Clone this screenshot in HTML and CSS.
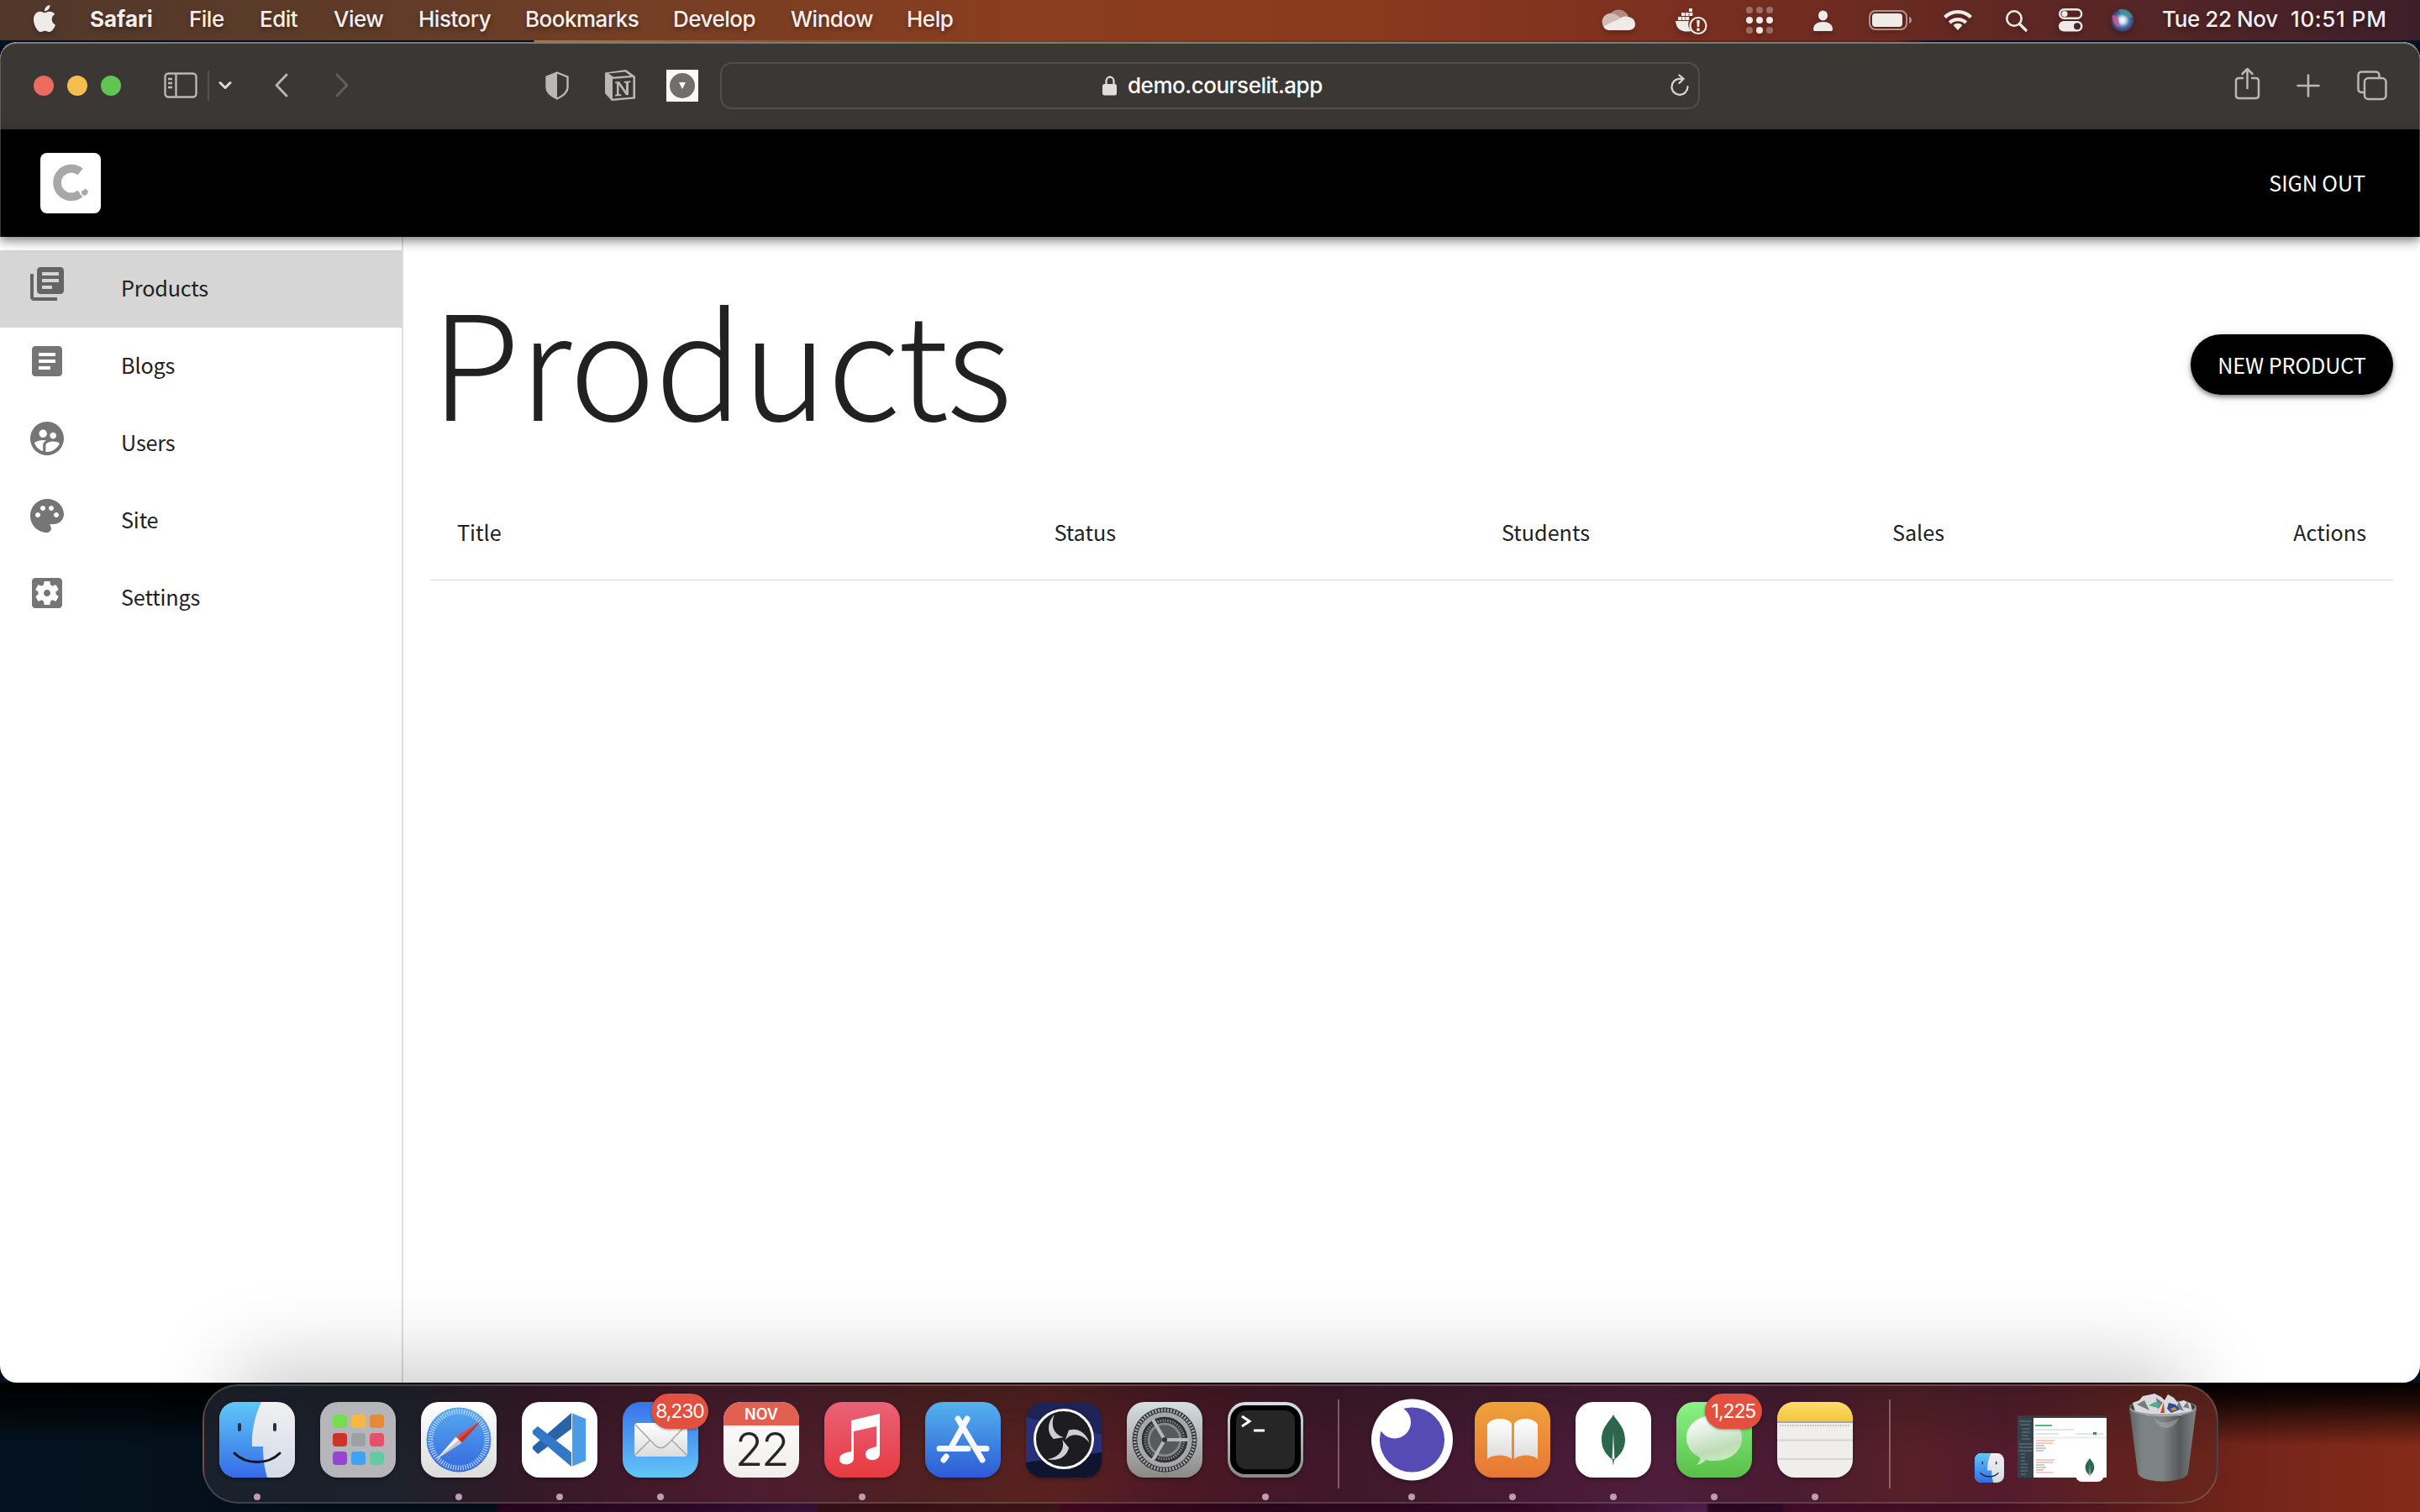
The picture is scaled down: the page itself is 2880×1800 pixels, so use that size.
FILE: index.html
```html
<!DOCTYPE html>
<html lang="en">
<head>
<meta charset="utf-8">
<title>Products</title>
<link rel="stylesheet" href="styles.css">
</head>
<body>
<header class="menubar">
  <svg class="apple" viewBox="0 0 24 24"><path d="M12.152 6.896c-.948 0-2.415-1.078-3.96-1.04-2.04.027-3.91 1.183-4.961 3.014-2.117 3.675-.546 9.103 1.519 12.09 1.013 1.454 2.208 3.09 3.792 3.039 1.52-.065 2.09-.987 3.935-.987 1.831 0 2.35.987 3.96.948 1.637-.026 2.676-1.48 3.676-2.948 1.156-1.688 1.636-3.325 1.662-3.415-.039-.013-3.182-1.221-3.22-4.857-.026-3.04 2.48-4.494 2.597-4.559-1.429-2.09-3.623-2.324-4.39-2.376-2-.156-3.675 1.09-4.61 1.09zM15.53 3.83c.843-1.012 1.4-2.427 1.245-3.83-1.207.052-2.662.805-3.532 1.818-.78.896-1.454 2.338-1.273 3.714 1.338.104 2.715-.688 3.559-1.701"/></svg>
  <nav class="menus"><b>Safari</b><span>File</span><span>Edit</span><span>View</span><span>History</span><span>Bookmarks</span><span>Develop</span><span>Window</span><span>Help</span></nav>
  <div class="status">
    <svg width="40" height="44" viewBox="0 0 40 44"><path d="M9 19a12 11 0 0 1 23 1l-10 5z" fill="#b28a81"/><path d="M2 31a10 10 0 0 1 7-15c7-1 10 3 15 6z" fill="#d2bab5"/><path d="M2 31 22 22c3-3 7-3 10-2 5 1 8 4 8 9 0 4-3 7-8 7H10c-4 0-7-2-8-5z"/></svg>
    <svg width="40" height="44" viewBox="0 0 40 44"><path d="M17 10h4v4h-4zM8 15h4v4H8zM12.700 15h4v4h-4zM17.400 15h4v4h-4zM4 20h4v4H4zM8.600 20h4v4h-4zM13.200 20h4v4h-4zM1 25h16c-2 5 0 9 3 12-10 2-18-1-19-12z"/><circle cx="28" cy="30.500" r="9.500" fill="none" stroke="#efebe9" stroke-width="2.200"/><path d="M26.200 24h3.600l-.6 8h-2.400z"/><circle cx="28" cy="35.200" r="1.900"/></svg>
    <svg width="34" height="44" viewBox="0 0 34 44"><g opacity=".35"><circle cx="4" cy="12" r="4"/><circle cx="16" cy="12" r="4"/><circle cx="28" cy="12" r="4"/><circle cx="4" cy="36" r="4"/><circle cx="28" cy="36" r="4"/></g><circle cx="4" cy="24" r="4"/><circle cx="16" cy="24" r="4"/><circle cx="28" cy="24" r="4"/><circle cx="16" cy="36" r="4"/></svg>
    <svg width="26" height="44" viewBox="0 0 26 44"><ellipse cx="12.500" cy="18.500" rx="5.500" ry="6"/><path d="M1 35c0-6 5-9 11.500-9S24 29 24 35c0 1.500-1 2-2 2H3c-1 0-2-.5-2-2z"/></svg>
    <svg width="52" height="44" viewBox="0 0 52 44"><rect x="1" y="13" width="44" height="22" rx="7" fill="none" stroke="#efebe9" stroke-width="2" opacity=".55"/><rect x="4" y="16" width="36" height="16" rx="4"/><path d="M48 20c4 1 4 7 0 8z" opacity=".55"/></svg>
    <svg width="36" height="44" viewBox="0 0 36 44"><g fill="none" stroke="#efebe9" stroke-width="4.400"><path d="M1.500 20.500a22 22 0 0 1 31 0"/><path d="M7.300 27a14 14 0 0 1 19.400 0"/></g><path d="M17 36l-5.500-6a8 8 0 0 1 11 0z"/></svg>
    <svg width="28" height="44" viewBox="0 0 28 44" stroke="#efebe9" stroke-width="2.600"><circle cx="10" cy="22" r="8.700" fill="none"/><path d="M16.500 28.500l7.500 7.500" stroke-width="3.200" stroke-linecap="round"/></svg>
    <svg width="30" height="44" viewBox="0 0 30 44"><rect x="1.200" y="11.200" width="26" height="10.600" rx="5.300" fill="none" stroke="#efebe9" stroke-width="2.400"/><circle cx="7" cy="16.500" r="3.600"/><rect y="25" width="28.500" height="12.500" rx="6.200"/><circle cx="22" cy="31.200" r="4" fill="#4a242b"/></svg>
    <svg width="30" height="44" viewBox="0 0 30 44"><defs><radialGradient id="siri"><stop offset="0" stop-color="#fff"/><stop offset=".25" stop-color="#cfe6f2"/><stop offset=".6" stop-color="#4d6fb0"/><stop offset="1" stop-color="#3a2f52"/></radialGradient></defs><circle cx="14" cy="24" r="14" fill="url(#siri)"/><path d="M2 18c5 0 9 5 8 14-5 0-9-8-8-14z" fill="#d9548a" opacity=".8"/><path d="M9 12c8-3 15 2 17 9-6 0-13-3-17-9z" fill="#3fa08a" opacity=".8"/></svg>
    <span>Tue 22 Nov</span><span class="time">10:51 PM</span>
  </div>
</header>

<main class="window">
  <div class="toolbar">
    <div class="lights"><i></i><i></i><i></i></div>
    <svg class="t-side" width="40" height="32" viewBox="0 0 40 32" fill="none" stroke="#bbb7b4" stroke-width="2.400"><rect x="1.500" y="1.500" width="37" height="28" rx="4"/><path d="M14.500 2v27M5 8h5M5 13h5M5 18h5"/></svg>
    <span class="t-line"></span>
    <svg class="t-chev" width="16" height="12" viewBox="0 0 16 12" fill="none" stroke="#dddad8" stroke-width="3" stroke-linecap="round" stroke-linejoin="round"><path d="M2 2.500l6 6 6-6"/></svg>
    <svg class="t-back" width="18" height="32" viewBox="0 0 18 32" fill="none" stroke="#bbb7b4" stroke-width="2.800" stroke-linecap="round" stroke-linejoin="round"><path d="M15 3L3 15.500 15 28"/></svg>
    <svg class="t-fwd" width="18" height="32" viewBox="0 0 18 32" fill="none" stroke="#63605c" stroke-width="2.800" stroke-linecap="round" stroke-linejoin="round"><path d="M3 3l12 12.500L3 28"/></svg>
    <svg class="t-shield" width="28" height="34" viewBox="0 0 28 34"><path d="M14 1.500l12.500 5V19c0 6-6 10.500-12.500 13.500C7.500 29.500 1.500 25 1.500 19V6.500z" fill="none" stroke="#bbb7b4" stroke-width="2.400"/><path d="M14 1.500v31C7.500 29.500 1.500 25 1.500 19V6.500z" fill="#bbb7b4"/></svg>
    <svg class="t-notion" width="38" height="40" viewBox="0 0 38 40"><path d="M1 4.500L26 1l11 8v26.500L9 38 1 29z" fill="#bbb7b4"/><path d="M5 5.500L25 3.500l6 4.500-20 1.500zM10 12l24.500-2v23.500L10 35.500z" fill="#3b3734"/><path d="M13 15.500l5-.5 8 11.500V17l-2.500-.5V15l8-.7v1.500l-2.500.7V31l-3 .3L17.500 19v11l3 .5v1.400l-7.500.6v-1.500l2-.7V17.300l-2-.3z" fill="#bbb7b4"/></svg>
    <svg class="t-ext" width="38" height="38" viewBox="0 0 38 38"><path d="M0 0h38v38H0z" fill="#fafafa"/><circle cx="19" cy="19" r="15" fill="#716e6c"/><path d="M15 15h8l-4 8z" fill="#fff"/></svg>
    <div class="url">
      <span class="host"><svg width="18" height="24" viewBox="0 0 18 24"><path d="M4.500 11V7a4.500 5.300 0 0 1 9 0v4" fill="none" stroke="#dedede" stroke-width="2.200"/><rect y="10" width="17" height="13.500" rx="2.500" fill="#dedede"/></svg>demo.courselit.app</span>
      <svg class="reload" width="24" height="28" viewBox="0 0 24 28" fill="none" stroke="#d8d5d3" stroke-width="2.200" stroke-linecap="round"><path d="M20.500 15a9.500 9.500 0 1 1-9.500-9.200h4M10.500 1.500l5 4.400-5 5"/></svg>
    </div>
    <svg class="t-share" width="32" height="40" viewBox="0 0 32 40" fill="none" stroke="#bbb7b4" stroke-width="2.500" stroke-linecap="round" stroke-linejoin="round"><path d="M10 13H5.500C3 13 2 14 2 16.500v17C2 36 3 37 5.500 37h20c2.500 0 3.500-1 3.500-3.500v-17c0-2.500-1-3.500-3.500-3.500H21M15.500 25V2M9.500 8l6-6 6 6"/></svg>
    <svg class="t-plus" width="28" height="28" viewBox="0 0 28 28" stroke="#bbb7b4" stroke-width="2.600" stroke-linecap="round"><path d="M14 1.500v25M1.500 14h25"/></svg>
    <svg class="t-tabs" width="36" height="36" viewBox="0 0 36 36" fill="none" stroke="#bbb7b4" stroke-width="2.500"><path d="M8.500 26H6c-3 0-4.500-1.500-4.500-4.500V6C1.500 3 3 1.500 6 1.500h16c3 0 4.500 1.500 4.500 4.500v3"/><rect x="9" y="9" width="25.500" height="25" rx="4.500"/></svg>
  </div>

  <div class="appbar">
    <svg class="logo" viewBox="0 0 72 72"><rect width="72" height="72" rx="8" fill="#fff"/><path d="M47.500 22.500A16.800 16.800 0 1 0 47.500 48.500" fill="none" stroke="#a8a8a8" stroke-width="9.800"/><circle cx="53" cy="46.500" r="6" fill="#fff"/><path d="M53.500 42c1 1.500 1.500 2 2 3l1.200-1.200c.5 2-.2 7-4 7s-4.800-4-2.800-6.500l1 1c.5-1.300 1.800-2 2.600-3.300z" fill="#a8a8a8"/></svg>
    <span class="signout">SIGN OUT</span>
  </div>

  <div class="content">
    <aside class="sidebar">
      <a class="item selected"><svg viewBox="0 0 24 24"><path d="M4 6H2v14c0 1.100.9 2 2 2h14v-2H4V6zm16-4H8c-1.100 0-2 .9-2 2v12c0 1.100.9 2 2 2h12c1.100 0 2-.9 2-2V4c0-1.100-.9-2-2-2zm-1 9H9V9h10v2zm-4 4H9v-2h6v2zm4-8H9V5h10v2z"/></svg><span>Products</span></a>
      <a class="item"><svg viewBox="0 0 24 24"><path d="M19 3H5c-1.100 0-2 .9-2 2v14c0 1.100.9 2 2 2h14c1.100 0 2-.9 2-2V5c0-1.100-.9-2-2-2zm-5 14H7v-2h7v2zm3-4H7v-2h10v2zm0-4H7V7h10v2z"/></svg><span>Blogs</span></a>
      <a class="item"><svg viewBox="0 0 24 24"><path d="M11.990 2c-5.520 0-10 4.480-10 10s4.480 10 10 10 10-4.480 10-10-4.480-10-10-10zm3.610 6.340c1.070 0 1.930.86 1.930 1.930 0 1.070-.86 1.930-1.930 1.930-1.070 0-1.930-.86-1.930-1.930-.01-1.070.86-1.930 1.930-1.930zm-6-1.580c1.300 0 2.360 1.060 2.360 2.360 0 1.300-1.060 2.360-2.360 2.360s-2.360-1.060-2.360-2.360c0-1.310 1.050-2.360 2.360-2.360zm0 9.130v3.750c-2.400-.75-4.300-2.600-5.140-4.960 1.050-1.120 3.670-1.690 5.140-1.690.53 0 1.200.08 1.900.22-1.640.87-1.900 2.020-1.900 2.680zM11.990 20c-.27 0-.53-.01-.79-.04v-4.070c0-1.420 2.940-2.130 4.400-2.130 1.070 0 2.920.39 3.840 1.150-1.170 2.970-4.060 5.090-7.450 5.090z"/></svg><span>Users</span></a>
      <a class="item"><svg viewBox="0 0 24 24"><path d="M12 2C6.490 2 2 6.490 2 12s4.490 10 10 10c1.380 0 2.500-1.120 2.500-2.500 0-.61-.23-1.200-.64-1.670-.08-.1-.13-.21-.13-.33 0-.28.22-.5.5-.5H16c3.310 0 6-2.690 6-6 0-4.960-4.490-9-10-9zm5.500 11c-.83 0-1.500-.67-1.500-1.500s.67-1.500 1.500-1.500 1.500.67 1.500 1.500-.67 1.500-1.500 1.500zm-3-4c-.83 0-1.500-.67-1.500-1.500S13.670 6 14.500 6s1.500.67 1.500 1.500S15.330 9 14.500 9zM5 11.500c0-.83.67-1.500 1.500-1.500s1.500.67 1.500 1.500S7.330 13 6.500 13 5 12.330 5 11.500zm6-4c0 .83-.67 1.500-1.500 1.500S8 8.330 8 7.500 8.670 6 9.500 6s1.500.67 1.500 1.500z"/></svg><span>Site</span></a>
      <a class="item"><svg viewBox="0 0 24 24"><path d="M12 10c-1.100 0-2 .9-2 2s.9 2 2 2 2-.9 2-2-.9-2-2-2zm7-7H5c-1.110 0-2 .9-2 2v14c0 1.100.89 2 2 2h14c1.110 0 2-.9 2-2V5c0-1.100-.89-2-2-2zm-1.750 9c0 .23-.02.46-.05.68l1.480 1.160c.13.11.17.3.08.45l-1.400 2.420c-.09.15-.27.21-.43.15l-1.740-.7c-.36.28-.76.51-1.180.69l-.26 1.850c-.03.17-.18.3-.35.3h-2.800c-.17 0-.32-.13-.35-.29l-.26-1.850c-.43-.18-.82-.41-1.180-.69l-1.740.7c-.16.06-.34 0-.43-.15l-1.400-2.420c-.09-.15-.05-.34.08-.45l1.480-1.160c-.03-.23-.05-.46-.05-.69 0-.23.02-.46.05-.68l-1.480-1.160c-.13-.11-.17-.3-.08-.45l1.400-2.420c.09-.15.27-.21.43-.15l1.740.7c.36-.28.76-.51 1.180-.69l.26-1.850c.03-.17.18-.3.35-.3h2.800c.17 0 .32.13.35.29l.26 1.850c.43.18.82.41 1.180.69l1.740-.7c.16-.06.34 0 .43.15l1.400 2.420c.09.15.05.34-.08.45l-1.480 1.160c.03.23.05.46.05.69z"/></svg><span>Settings</span></a>
    </aside>
    <section class="page">
      <div class="heading"><h1>Products</h1><button class="new">NEW PRODUCT</button></div>
      <div class="thead"><span>Title</span><span>Status</span><span>Students</span><span>Sales</span><span>Actions</span></div>
    </section>
  </div>
</main>

<footer class="desktop">
  <svg width="0" height="0" class="defs"><defs>
    <linearGradient id="fb" x2="0" y2="1"><stop stop-color="#5fc8f8"/><stop offset="1" stop-color="#356be8"/></linearGradient>
    <linearGradient id="fw" x2="0" y2="1"><stop stop-color="#f1f0f2"/><stop offset="1" stop-color="#d3dbe6"/></linearGradient>
    <linearGradient id="sf" x2="0" y2="1"><stop stop-color="#56aaf0"/><stop offset="1" stop-color="#3668e0"/></linearGradient>
    <linearGradient id="wg" x2="0" y2="1"><stop stop-color="#fff"/><stop offset="1" stop-color="#dcdcdc"/></linearGradient>
    <linearGradient id="mt" x2="0" y2="1"><stop stop-color="#d6dee3"/><stop offset="1" stop-color="#8b8985"/></linearGradient>
    <linearGradient id="tr" x2="1" y2="0"><stop stop-color="#5d6265"/><stop offset=".18" stop-color="#7c8184"/><stop offset=".5" stop-color="#7e8386"/><stop offset=".75" stop-color="#55595c"/><stop offset="1" stop-color="#808487"/></linearGradient>
    <linearGradient id="bb" x1=".3" x2=".6" y2="1"><stop stop-color="#fff"/><stop offset=".7" stop-color="#bfdcb8"/><stop offset="1" stop-color="#c9f0bd"/></linearGradient>
    <g id="finder"><rect width="90" height="90" rx="21" fill="url(#fw)"/><path d="M50 0H21C8 0 0 8 0 21v48c0 13 8 21 21 21h36c-3-10-5-22-5-37H39C38 34 43 15 50 0z" fill="url(#fb)"/><path d="M24 27v6M66 27v6" stroke="#2a2e3a" stroke-width="4" stroke-linecap="round"/><path d="M18 61c14 14 40 14 54 0" fill="none" stroke="#16161a" stroke-width="3" stroke-linecap="round"/></g>
    <g id="leaf"><path d="M45 15c3 7 14 14 14 30 0 12-7 19-13 24l-1 7-1-7c-6-5-13-12-13-24 0-16 11-23 14-30z" fill="#2c664c"/><path d="M45 36l1.500 32h-3z" fill="#e6efe9"/></g>
  </defs></svg>
  <div class="dock">
    <div class="app run"><svg viewBox="0 0 90 90"><use href="#finder"/></svg></div>
    <div class="app launch"><svg viewBox="0 0 90 90"><rect width="90" height="90" rx="21" fill="#b5b5ba"/><g><rect x="15" y="15" width="17" height="16" rx="4" fill="#74de50"/><rect x="37" y="15" width="17" height="16" rx="4" fill="#f4b942"/><rect x="59" y="15" width="17" height="16" rx="4" fill="#e58a38"/><rect x="15" y="37" width="17" height="16" rx="4" fill="#cb3427"/><rect x="37" y="37" width="17" height="16" rx="4" fill="#9ba2a6"/><rect x="59" y="37" width="17" height="16" rx="4" fill="#e8506a"/><rect x="15" y="59" width="17" height="16" rx="4" fill="#9347ce"/><rect x="37" y="59" width="17" height="16" rx="4" fill="#42a2f2"/><rect x="59" y="59" width="17" height="16" rx="4" fill="#66c9a6"/></g></svg></div>
    <div class="app run"><svg viewBox="0 0 90 90"><rect width="90" height="90" rx="21" fill="url(#wg)"/><circle cx="45" cy="45" r="38.500" fill="url(#sf)"/><circle cx="45" cy="45" r="33.500" fill="none" stroke="#c8def8" stroke-width="6" stroke-dasharray="1.100 1.824"/><path d="M72 22L41.500 41.500l7 7z" fill="#e4493e"/><path d="M18.500 68l23-26.500 7 7z" fill="#f4f4f4"/><path d="M72 22L45 45l3.500 3.500z" fill="#b83730"/><path d="M18.500 68L45 45l3.500 3.500z" fill="#c4c6ca"/></svg></div>
    <div class="app run"><svg viewBox="0 0 90 90"><rect width="90" height="90" rx="21" fill="#fff"/><path d="M59 13v19L19 62l-6-6v-3z" fill="#2864a8"/><path d="M19 29l40 31v17L13 38v-4z" fill="#3277c8"/><path d="M59 13l17 7v50l-17 7c2-1 1-3 1-5V18c0-2 1-4-1-5z" fill="#4a9be8"/></svg></div>
    <div class="app run mail"><svg viewBox="0 0 90 90"><defs><linearGradient id="ml" x2="0" y2="1"><stop stop-color="#3a72ea"/><stop offset="1" stop-color="#62c6f8"/></linearGradient></defs><rect width="90" height="90" rx="21" fill="url(#ml)"/><rect x="14" y="25" width="63" height="40" rx="4" fill="url(#wg)"/><path d="M15 63l18-18M76 63L58 45M15 27l23 24c5 5 10 5 15 0l23-24" fill="none" stroke="#a9a9ab" stroke-width="1.600"/></svg><span class="badge">8,230</span></div>
    <div class="app"><div class="cal"><b>NOV</b><span>22</span></div></div>
    <div class="app run"><svg viewBox="0 0 90 90"><defs><linearGradient id="mu" x2="0" y2="1"><stop stop-color="#ea6278"/><stop offset="1" stop-color="#e63a41"/></linearGradient></defs><rect width="90" height="90" rx="21" fill="url(#mu)"/><path d="M32 22l34-8v48c0 9-17 10-17 0 0-6 7-7 13-9V29l-27 6v32c0 9-17 10-17 1 0-6 7-8 14-9z" fill="#fff"/></svg></div>
    <div class="app"><svg viewBox="0 0 90 90"><defs><linearGradient id="as" x2="0" y2="1"><stop stop-color="#54b2ee"/><stop offset="1" stop-color="#2c5bd6"/></linearGradient></defs><rect width="90" height="90" rx="21" fill="url(#as)"/><path d="M50 20L31 54M39 20l29 49M17 55.500h34M62 55.500h11M25 65l-3 4" stroke="#f8f9fc" stroke-width="7" stroke-linecap="round"/></svg></div>
    <div class="app"><svg viewBox="0 0 90 90"><rect width="90" height="90" rx="21" fill="#1d2356"/><path d="M0 18l25 6v44L0 72zM70 35l20 4v22l-20 4z" fill="#29307a"/><path d="M0 72l90-12v9c0 13-8 21-21 21H21C9 90 0 82 0 72z" fill="#10152f"/><circle cx="45" cy="44" r="34.500" fill="#1d1c20" stroke="#fff" stroke-width="3"/><g id="ob"><path d="M34 15c-8 8-10 21-1 29l12-2c-13-3-16-16-11-27z" fill="#cfcfd1"/></g><use href="#ob" transform="rotate(120 45 44)"/><use href="#ob" transform="rotate(240 45 44)"/></svg></div>
    <div class="app"><svg viewBox="0 0 90 90"><rect width="90" height="90" rx="21" fill="url(#mt)"/><circle cx="45" cy="45" r="38.500" fill="#2e3032"/><circle cx="45" cy="45" r="35.500" fill="none" stroke="#a9adb0" stroke-width="4" stroke-dasharray="2 1.700"/><circle cx="45" cy="45" r="30" fill="none" stroke="#a4a8aa" stroke-width="5.500"/><circle cx="45" cy="45" r="23" fill="none" stroke="#85898b" stroke-width="3" stroke-dasharray="1.500 1.500"/><circle cx="45" cy="45" r="19" fill="#58595a" stroke="#85898b" stroke-width="3"/><path d="M45 45h28M45 45L31 21M45 45L31 69" stroke="#b4b8ba" stroke-width="4"/><circle cx="45" cy="45" r="3" fill="#333"/></svg></div>
    <div class="app run"><svg viewBox="0 0 90 90"><rect width="90" height="90" rx="21" fill="url(#mt)"/><rect x="3" y="4" width="84" height="82" rx="18" fill="#000"/><rect x="10" y="10" width="70" height="70" rx="12" fill="#262626"/><path d="M17 17l9 6-9 6M31 34h13" fill="none" stroke="#fff" stroke-width="3"/></svg></div>
    <div class="sep"></div>
    <div class="app run"><svg class="round" viewBox="0 0 98 98"><circle cx="49" cy="49" r="49" fill="#fff"/><circle cx="49" cy="49" r="39" fill="#564bb5"/><circle cx="28" cy="28" r="19.500" fill="#fff"/></svg></div>
    <div class="app run"><svg viewBox="0 0 90 90"><defs><linearGradient id="bk" x2="0" y2="1"><stop stop-color="#f0a23b"/><stop offset="1" stop-color="#e87735"/></linearGradient></defs><rect width="90" height="90" rx="21" fill="url(#bk)"/><path d="M15 27c5-9 24-9 29-1v42c-6-6-23-6-29 0zM47 26c5-8 23-8 28 1v41c-6-6-22-6-28 0z" fill="url(#wg)"/></svg></div>
    <div class="app run"><svg viewBox="0 0 90 90"><rect width="90" height="90" rx="21" fill="#fff"/><use href="#leaf"/></svg></div>
    <div class="app run"><svg viewBox="0 0 90 90"><defs><linearGradient id="ms" x2="0" y2="1"><stop stop-color="#8bf388"/><stop offset="1" stop-color="#58bf48"/></linearGradient></defs><rect width="90" height="90" rx="21" fill="url(#ms)"/><path d="M45 16c19 0 33 11 33 27S64 70 45 70c-4 0-7 0-10-1-2 3-6 5-11 6 3-3 5-6 4-9C18 61 12 53 12 43c0-16 14-27 33-27z" fill="url(#bb)"/></svg><span class="badge">1,225</span></div>
    <div class="app run"><svg viewBox="0 0 90 90"><defs><linearGradient id="nt" x2="0" y2="1"><stop stop-color="#fbdd6c"/><stop offset="1" stop-color="#f4c63a"/></linearGradient></defs><rect width="90" height="90" rx="21" fill="#efeeeb"/><path d="M0 23V21C0 8 8 0 21 0h48c13 0 21 8 21 21v2z" fill="url(#nt)"/><path d="M0 24h90" stroke="#aaa69e" stroke-width="2"/><path d="M3 28h84" stroke="#bbb" stroke-width="2" stroke-dasharray="1.500 1.500"/><path d="M0 45.500h90M0 68h90" stroke="#d5d4d6" stroke-width="2"/></svg></div>
    <div class="sep wide"></div>
    <svg class="mini" viewBox="0 0 90 90"><use href="#finder"/></svg>
    <div class="thumb">
      <svg width="106" height="74" viewBox="0 0 106 74"><path d="M0 0h106v74H0z" fill="#fff"/><path d="M0 0h106v3H0z" fill="#3f3a37"/><path d="M0 3h19v71H0z" fill="#32434c"/><path d="M2 34h16M2 38h16M2 42h16M4 46h5M4 50h5M4 54h5M4 58h8M4 62h8M4 66h8M4 70h6M2 7h14M3 11h12M5 16h10M5 20h10M5 24h8M5 28h10" stroke="#6f7f87" stroke-width="1.200"/><path d="M21 12h20" stroke="#58b884" stroke-width="2"/><path d="M21 17h46M21 22h28M70 22h32" stroke="#c4caca" stroke-width="1.200"/><path d="M19 25h87v3H19z" fill="#f0f2f2"/><path d="M90 20h4v3h-4z" fill="#2f9a5a"/><path d="M22 30h22M22 33h20M22 53h22M22 56h20M22 68h20" stroke="#efb9ac" stroke-width="1.300"/><path d="M22 36h10M22 39h12M22 42h9M22 59h10M22 62h12M22 65h9" stroke="#b3bcbc" stroke-width="1.300"/></svg>
      <svg class="chip" viewBox="0 0 90 90"><rect width="90" height="90" rx="21" fill="#fff"/><use href="#leaf"/></svg>
    </div>
    <svg class="trash" width="82" height="104" viewBox="0 0 82 104"><path d="M1 15c0-11 80-11 80 0l-10 78c-2 14-58 14-60 0z" fill="url(#tr)"/><ellipse cx="41" cy="15" rx="38" ry="8" fill="#3b3e40"/><path d="M5 10l8-3 4-5 10-2 4-1 8 4 4 4 4-7 7 4 4 5 8-2 8 4 2 9-14 5-20 1-20-1-14-5z" fill="#d9dadb"/><path d="M10 12l9-5 6 12zM33 4l8 6-6 8zM60 8l6 12-9-4zM70 9l3 8-8-2z" fill="#77797b"/><path d="M24 13l8-4 7 2-5 5z" fill="#4fb54a"/><path d="M28 11l5-2 4 3-6 2z" fill="#4aa3e0"/><path d="M38 22l4-12 1 12z" fill="#c9472f"/><path d="M48 10l8 2 5 6-10 4-5-5z" fill="#2d4a94"/><path d="M50 17l5-2 3 3-6 2z" fill="#d9823c"/><path d="M2 17c4 10 74 10 78 0" fill="none" stroke="#989c9e" stroke-width="2"/><path d="M30 28c10 8 20 6 30 0-4 12-20 20-30 0z" fill="#a9adb0" opacity=".5"/></svg>
  </div>
</footer>
</body>
</html>
```
FILE: styles.css
```css
* { box-sizing: border-box; }
body {
  margin: 0;
  width: 2880px;
  height: 1800px;
  overflow: hidden;
  display: flex;
  flex-direction: column;
  background:
    linear-gradient(90deg, #04101c 0, #04101c 635px, #b5752c 636px, #8a3a1c 1150px, #6a1a1c 2250px, #0a1226 2300px) 0 48px / 100% 2px no-repeat,
    #04101c;
  font-family: "Noto Sans CJK SC", "Noto Sans", sans-serif;
  color: #212121;
}
svg { display: block; flex: none; }

/* macOS menu bar */
.menubar {
  height: 48px;
  flex: none;
  display: flex;
  align-items: center;
  background: linear-gradient(90deg, #51382b 0, #5f3b28 15%, #753f25 27%, #8a3d1f 42%, #8c3a1e 55%, #80321f 66%, #6a2a21 78%, #542526 89%, #3d1f29 100%);
  color: #f3efed;
  font: 500 26px/48px Inter, sans-serif;
  letter-spacing: -.5px;
  white-space: nowrap;
}
.menubar svg { fill: #efebe9; filter: drop-shadow(0 3px 3px rgba(0,0,0,.25)); }
.menubar span, .menubar b { text-shadow: 0 3px 5px rgba(0,0,0,.35); }
.menubar .apple { width: 32px; height: 32px; margin: -4px 0 0 37px; }
.menus {
  display: grid;
  grid-template-columns: 118px 84px 88px 101px 127px 176px 140px 138px 100px;
  margin: -2px 0 0 38px;
}
.menus b { font-weight: 700; letter-spacing: 0; }
.status {
  margin-left: auto;
  display: grid;
  align-items: start;
  height: 48px;
  grid-template-columns: 87px 85px 79px 67px 89px 74px 63px 62px 61px 153px 154px;
}
.status span { margin-top: -1px; letter-spacing: -.4px; }
.status .time { letter-spacing: .6px; }

/* Browser window */
.window {
  height: 1596px;
  flex: none;
  margin-top: 2px;
  display: flex;
  flex-direction: column;
  border-radius: 20px;
  overflow: hidden;
  background: #fff;
}
.toolbar {
  height: 104px;
  flex: none;
  display: flex;
  align-items: center;
  padding-bottom: 2px;
  background: #3b3734;
  border: 1px solid #5d5a57;
  border-top: 2px solid #7d7a77;
  border-bottom: 0;
  border-radius: 20px 20px 0 0;
}
.lights { display: flex; gap: 16px; margin-left: 39px; }
.lights i { width: 24px; height: 24px; border-radius: 50%; background: #ec6a5e; }
.lights i:nth-child(2) { background: #f4bf4f; }
.lights i:nth-child(3) { background: #61c554; }
.t-side { margin-left: 51px; }
.t-line { width: 2px; height: 36px; margin-left: 12px; background: #54504d; }
.t-chev { margin-left: 11px; }
.t-back { margin: 0 0 0 50px; }
.t-fwd { margin-left: 54px; }
.t-shield { margin-left: 233px; }
.t-notion { margin-left: 42px; }
.t-ext { margin-left: 36px; }
.url {
  width: 1166px;
  height: 56px;
  margin-left: 26px;
  border: 2px solid #524e4b;
  border-radius: 14px;
  display: flex;
  align-items: center;
}
.host {
  margin-left: 453px;
  display: flex;
  gap: 12px;
  align-items: center;
  color: #fff;
  font: 500 26px/40px Inter, sans-serif;
  letter-spacing: -.48px;
}
.reload { margin: 0 9px 0 auto; }
.t-share { margin: -4px 0 0 636px; }
.t-plus { margin-left: 42px; }
.t-tabs { margin-left: 44px; }

/* Application bar */
.appbar {
  height: 128px;
  flex: none;
  display: flex;
  align-items: center;
  justify-content: space-between;
  padding: 0 64px 0 48px;
  background: #000;
  border: 1px solid #3a3a3a;
  border-width: 0 1px;
  box-shadow: 0 4px 8px -2px rgba(0,0,0,.3), 0 8px 10px rgba(0,0,0,.18), 0 2px 20px rgba(0,0,0,.14);
  position: relative;
  color: #fff;
}
.logo { width: 72px; height: 72px; margin-left: -1px; }
.signout { font-size: 25.2px; letter-spacing: -.1px; margin-top: -2px; }

.content { flex: 1; display: flex; }
.sidebar {
  width: 480px;
  flex: none;
  padding-top: 16px;
  border-right: 2px solid #dedede;
}
.item { display: flex; height: 92px; padding: 16px 32px; }
.item svg { width: 48px; height: 48px; fill: #757575; }
.item span { margin: 6px 0 0 64px; font-size: 25.2px; line-height: 44px; letter-spacing: -.15px; }
.item.selected { background: #d6d6d6; }
.item.selected svg { fill: #646464; }

.page { flex: 1; padding: 48px 32px 0; }
.heading { height: 208px; display: flex; align-items: center; justify-content: space-between; }
h1 { margin: -17px 0 0 1px; font-size: 173px; font-weight: 300; line-height: 250px; letter-spacing: -.8px; }
.new {
  width: 241px;
  height: 72px;
  margin: 0;
  padding: 0;
  border: 0;
  border-radius: 36px;
  background: #000;
  color: #fff;
  font: 400 25.2px/70px "Noto Sans CJK SC", sans-serif;
  letter-spacing: -.1px;
  box-shadow: 0 3px 5px rgba(0,0,0,.4), 0 2px 12px rgba(0,0,0,.15);
}
.thead {
  display: grid;
  grid-template-columns: 32px 400px 416px 564px 422px 502px;
  height: 115px;
  margin-top: 38px;
  padding-top: 37px;
  border-bottom: 1px solid #d8d8d8;
  font-size: 25.2px;
  line-height: 40px;
}
.thead span { text-align: right; padding-right: 32px; }
.thead span:first-child { grid-column: 2; text-align: left; }

/* Wallpaper strip and dock */
.desktop {
  height: 154px;
  flex: none;
  position: relative;
  display: flex;
  padding: 2px 0 0 241px;
  background:
    linear-gradient(180deg, #000 0, rgba(0,0,0,.75) 25px, rgba(0,0,0,0) 75px),
    linear-gradient(90deg, #04121f 0, #04101b 591px, #2c0520 593px, #32082a 800px, #401240 970px, #3c1216 975px, #44171a 1258px, #4a0a24 1262px, #30061f 1500px, #3a0a28 1800px, #5a2054 2030px, #300824 2034px, #340a28 2120px, #4a0d2e 2125px, #4d1029 2350px, #70241b 2620px, #842a18 2880px);
}
.desktop::before {
  content: "";
  position: absolute;
  left: 320px;
  right: 320px;
  top: 22px;
  height: 100px;
  box-shadow: 0 0 100px 40px rgba(0,0,0,.22);
}
.defs { position: absolute; }
.dock {
  position: relative;
  width: 2399px;
  height: 142px;
  display: flex;
  padding-left: 3px;
  border: 2px solid rgba(255,255,255,.17);
  border-radius: 42px;
  background:
    linear-gradient(180deg, rgba(20,16,16,.28), rgba(20,16,16,0) 60%),
    linear-gradient(90deg, #19212c 0, #1d212b 230px, #341927 380px, #421929 520px, #4c1c2f 660px, #502021 860px, #592120 1010px, #4b1825 1160px, #3f182a 1350px, #461a34 1560px, #4e1d3b 1720px, #4a1b32 1880px, #582027 2030px, #531b2e 2140px, #61221f 2290px, #68251b 2399px);
  background-clip: border-box;
}
.app {
  width: 120px;
  flex: none;
  position: relative;
  display: flex;
  flex-direction: column;
  align-items: center;
  padding-top: 19px;
}
.app > svg { width: 90px; height: 90px; filter: drop-shadow(0 2px 2px rgba(0,0,0,.3)); }
.app > .round { width: 97px; height: 98px; margin: -4px 0; }
.run::after { content: ""; width: 8px; height: 8px; margin-top: 19px; border-radius: 50%; background: #bd9dae; }
.badge {
  position: absolute;
  left: 49px;
  top: 9px;
  width: 68px;
  height: 42px;
  border-radius: 21px;
  background: #e2503f;
  color: #fff;
  font: 400 23px/42px Inter, sans-serif;
  letter-spacing: -1.100px;
  text-align: center;
  box-shadow: 0 1px 3px rgba(0,0,0,.4);
}
.cal {
  width: 90px;
  height: 90px;
  border-radius: 21px;
  overflow: hidden;
  background: linear-gradient(#fff, #f0efec);
  display: flex;
  flex-direction: column;
  font-family: Inter, sans-serif;
  text-align: center;
}
.cal b { height: 28px; background: #e2604f; color: #fff; font-size: 18px; font-weight: 600; line-height: 30px; }
.cal span { font-size: 55px; font-weight: 300; line-height: 57px; letter-spacing: -2.500px; color: #262626; }
.sep { width: 54px; flex: none; padding: 16px 0 0 26px; }
.sep::before { content: ""; display: block; width: 2px; height: 106px; background: rgba(226,180,198,.42); }
.wide { width: 58px; padding-left: 28px; }
.mini { width: 35px; height: 35px; margin: 80px 0 0 72px; }
.thumb { position: relative; width: 106px; margin: 35px 0 0 16px; }
.chip { position: absolute; left: 69px; top: 45px; width: 34px; height: 34px; }
.trash { margin: 10px 0 0 26px; overflow: visible; }
```
